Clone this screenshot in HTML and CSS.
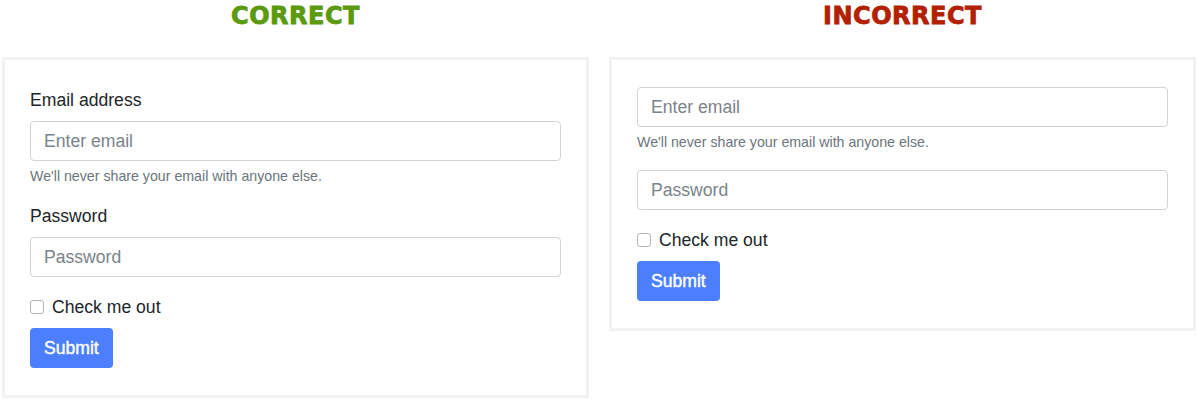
FILE: index.html
```html
<!DOCTYPE html>
<html lang="en">

<head>
  <meta charset="UTF-8">
  <title>Form Labels</title>
  <link rel="stylesheet" href="styles.css">
</head>

<body>

  <div class="compare">

    <div class="column">
      <h2 class="verdict good">CORRECT</h2>
      <div class="card">
        <form>
          <div class="form-group">
            <label for="email1">Email address</label>
            <input type="email" id="email1" class="form-control" placeholder="Enter email">
            <small class="help">We'll never share your email with anyone else.</small>
          </div>
          <div class="form-group">
            <label for="password1">Password</label>
            <input type="password" id="password1" class="form-control" placeholder="Password">
          </div>
          <label class="check"><input type="checkbox"> Check me out</label>
          <button type="submit" class="btn">Submit</button>
        </form>
      </div>
    </div>

    <div class="column">
      <h2 class="verdict bad">INCORRECT</h2>
      <div class="card">
        <form>
          <div class="form-group">
            <input type="email" class="form-control" placeholder="Enter email">
            <small class="help">We'll never share your email with anyone else.</small>
          </div>
          <div class="form-group">
            <input type="password" class="form-control" placeholder="Password">
          </div>
          <label class="check"><input type="checkbox"> Check me out</label>
          <button type="submit" class="btn">Submit</button>
        </form>
      </div>
    </div>

  </div>

</body>

</html>
```

FILE: styles.css
```css
* {
  box-sizing: border-box;
}

body {
  margin: 0;
  padding: 0;
  font-family: 'Liberation Sans', Arial, sans-serif;
  font-size: 17.6px;
  color: #212529;
  background: #ffffff;
}

.compare {
  display: grid;
  grid-template-columns: 587px 587px;
  column-gap: 20px;
  align-items: start;
  padding-left: 2px;
}

.verdict {
  margin: 4px 0 29px;
  font-family: 'DejaVu Sans', sans-serif;
  font-weight: bold;
  font-size: 24px;
  line-height: 24px;
  letter-spacing: 0.5px;
  text-align: center;
  -webkit-text-stroke: 0.8px currentColor;
}

.good {
  color: #5b990e;
}

.bad {
  color: #b22000;
}

.card {
  border: 3px solid #f2f2f2;
  padding: 27px 25px 27px;
}

.form-group {
  margin-bottom: 18px;
}

.form-group label {
  display: block;
  line-height: 24px;
  margin: 1px 0 9px;
}

.form-control {
  display: block;
  width: 100%;
  height: 40px;
  padding: 0 13px;
  font-family: inherit;
  font-size: 17.6px;
  color: #495057;
  border: 1px solid #ced4da;
  border-radius: 4px;
}

.form-control::placeholder {
  color: #7b838a;
}

.help {
  display: block;
  margin-top: 5px;
  font-size: 14.2px;
  line-height: 20px;
  color: #6c757d;
}

.check {
  display: flex;
  align-items: center;
  gap: 8px;
  line-height: 24px;
  margin: 4px 0 9px;
}

.check input {
  appearance: none;
  width: 14px;
  height: 14px;
  margin: 0;
  border: 1px solid #b5b5b5;
  border-radius: 3px;
  background: #fff;
}

.btn {
  display: block;
  height: 40px;
  padding: 0 14px;
  background: #4b7fff;
  border: none;
  border-radius: 4px;
  color: #fff;
  font-family: inherit;
  font-size: 17.6px;
  -webkit-text-stroke: 0.4px #fff;
}
```
